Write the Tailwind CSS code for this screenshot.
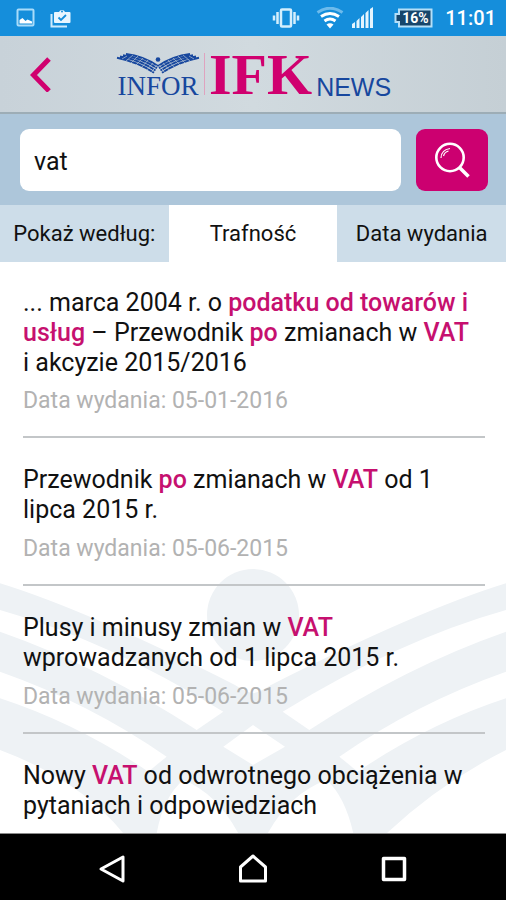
<!DOCTYPE html>
<html lang="pl">
<head>
<meta charset="utf-8">
<meta name="viewport" content="width=device-width, initial-scale=1">
<title>INFOR IFK News</title>
<script src="https://cdn.jsdelivr.net/npm/@tailwindcss/browser@4"></script>
</head>
<body class="flex min-h-screen flex-col bg-white font-[Roboto,sans-serif] text-[#111]">
  <!-- System status bar -->
  <div class="flex h-9 shrink-0 items-center justify-between bg-[#158edb] pr-2.5 pl-4 text-white">
    <div class="flex items-center gap-3.5">
      <svg class="h-5 w-5" viewBox="0 0 20 20" fill="none"><rect x="1.5" y="1.5" width="16" height="16" rx="1" stroke="#a9dcfa" stroke-width="2"/><path d="M3.500 15.500V12l3-2 3 3 2-1.500 4.500 2v2z" fill="#fff"/></svg>
      <svg class="h-5 w-[22px]" viewBox="0 0 22 20"><path d="M1.500 6v12.500H17" fill="none" stroke="#cdebfd" stroke-width="2"/><path d="M5 4h4a3.200 3.200 0 0 1 6 0h4.500q1 0 1 1v9q0 1-1 1H5q-1 0-1-1V5q0-1 1-1z" fill="#e8f6ff"/><path d="m8.500 9.500 2.500 2.500 5-5" fill="none" stroke="#158edb" stroke-width="1.800"/><circle cx="12" cy="3.400" r="1" fill="#158edb"/></svg>
    </div>
    <div class="flex items-center">
      <svg class="mr-4 h-5 w-7" viewBox="0 0 28 20" fill="none" stroke="#d5effd"><rect x="9" y="1.500" width="10" height="17" rx="1" stroke-width="2.500"/><path d="M5.500 4v12M22.500 4v12" stroke-width="2.500"/><path d="M2 7.500v5M26 7.500v5" stroke-width="2.500"/></svg>
      <svg class="mr-2 h-[22px] w-7" viewBox="0 0 28 22" fill="none"><path d="M1.500 5.500Q14-3 26.500 5.500" stroke="#6dbbec" stroke-width="3"/><path d="M5 9.500Q14 3.500 23 9.500M8.500 14Q14 10 19.500 14" stroke="#fff" stroke-width="3"/><path d="M10.500 17.500Q14 15 17.500 17.500L14 21.500z" fill="#fff"/></svg>
      <svg class="mr-5 h-[22px] w-[22px]" viewBox="0 0 22 22" fill="#e4f4fe"><path d="M0 21v-4l3-2v6zM4.500 21v-7l3-3v10zM9 21V10l3-3v14zM13.500 21V6l3-3v18zM18 21V2l3-2v21z"/></svg>
      <svg class="mr-3 h-5 w-[39px]" viewBox="0 0 39 20"><path d="M5 1.500h32.500v17H5V14H1.500V6H5z" fill="#17466b" stroke="#b5dff8" stroke-width="2"/><text x="21.500" y="15" text-anchor="middle" font-family="Roboto, sans-serif" font-weight="700" font-size="14" fill="#fff">16%</text></svg>
      <span class="text-[20px] leading-6 font-medium">11:01</span>
    </div>
  </div>

  <!-- App header -->
  <header class="relative z-10 flex h-[78px] shrink-0 items-center border-b-2 border-[#9dadb6] bg-linear-to-r from-[#c8d2d9] via-[#d1dadf] to-[#c5cfd5] pl-7">
    <a href="#" aria-label="Wstecz" class="block"><svg class="h-9 w-6" viewBox="0 0 24 36" fill="none" stroke="#d0006f" stroke-width="5"><path d="M21 3 5.500 19 21 35"/></svg></a>
    <div class="ml-16 flex h-12 items-end">
      <div class="flex w-[84px] flex-col items-center text-[#17479e]">
        <svg class="h-[21px] w-[84px]" viewBox="0 0 84 21" fill="none" stroke="currentColor">
          <circle cx="42" cy="6.500" r="2.300" fill="currentColor" stroke="none"/>
          <g id="wing">
            <path d="M10 1Q27 3 42 13M7 2.200Q26 5 41 15.300M4 3.500Q24 7 39.500 17.500M1 4.700Q22 9 38 19.700" stroke-width="1.900"/>
            <path d="M11 3 6 6M17 2l-7 6M22 3l-7 7M27 5l-7 7M32 7l-7 8M37 10l-7 8M40.500 12l-6 9" stroke="#ccd6dc" stroke-width=".6"/>
          </g>
          <use href="#wing" transform="matrix(-1 0 0 1 84 0)"/>
        </svg>
        <span class="font-['Liberation_Serif',serif] text-[27px] leading-6">INFOR</span>
      </div>
      <div class="ml-1 h-[42px] w-px self-center bg-[#dfa3bf]"></div>
      <span class="ml-1 font-['Liberation_Serif',serif] text-[58px] leading-[46px] font-bold text-[#d0006f]">IFK</span>
      <span class="ml-1 font-['Liberation_Sans',sans-serif] text-[25px] leading-[22px] text-[#17479e]">NEWS</span>
    </div>
  </header>

  <!-- Search -->
  <form class="flex shrink-0 gap-[15px] bg-[#adc6da] pt-[15px] pr-[18px] pb-3.5 pl-5" onsubmit="return false">
    <input type="text" value="vat" aria-label="Szukaj" class="h-[62px] min-w-0 flex-1 rounded-[9px] bg-white px-3.5 pt-0.5 text-[25px] outline-none">
    <button type="submit" aria-label="Szukaj" class="flex h-[62px] w-[72px] items-center justify-center rounded-[9px] bg-[#cc0070]">
      <svg class="h-9 w-9" viewBox="0 0 36 36" fill="none" stroke="#fff"><circle cx="16" cy="15.500" r="13.700" stroke-width="2.600"/><path d="m25.500 25.500 9 9" stroke-width="3.600"/><path d="M7 16q0-8 9-9.500M9.500 14q1-4 5-5" stroke-width="1.200"/></svg>
    </button>
  </form>

  <!-- Sort order -->
  <div class="grid h-[57px] shrink-0 grid-cols-3 bg-[#cddde9] text-center text-[22px] leading-[58px]">
    <span>Pokaż według:</span>
    <button type="button" class="bg-white">Trafność</button>
    <button type="button">Data wydania</button>
  </div>

  <!-- Results -->
  <main class="relative flex-1 overflow-hidden pr-[21px] pl-[23px]">
    <svg class="absolute bottom-0 left-0 w-full" viewBox="0 0 1518 850" aria-hidden="true">
      <circle cx="759" cy="195" r="138" fill="#eef2f5"/>
      <path d="M0 100Q260 180 705 405Q735 425 759 430Q783 425 813 405Q1258 180 1518 100V600Q1320 700 1160 850H1060Q1035 740 980 690Q870 730 803 850H715Q650 730 550 690Q490 740 470 850H370Q240 690 0 600z" fill="#eef2f5"/>
      <g id="gap" fill="#fff"><path d="M0 180Q320 270 670 485L590 540Q300 350 0 245z"/><path d="M0 365Q270 460 500 620L445 665Q230 520 0 445z"/></g>
      <use href="#gap" transform="matrix(-1 0 0 1 1518 0)"/>
      <path d="M759 525 855 590 759 645 670 590z" fill="#fff"/>
    </svg>
    <ul class="relative text-[25px] leading-[30px]">
      <li class="border-b-2 border-[#c3c6c8] pt-[26px] pb-5">
        <h2>... marca 2004 r. o <b class="font-medium text-[#c6106f]">podatku od towarów i</b><br><b class="font-medium text-[#c6106f]">usług</b> – Przewodnik <b class="font-medium text-[#c6106f]">po</b> zmianach w <b class="font-medium text-[#c6106f]">VAT</b><br>i akcyzie 2015/2016</h2>
        <p class="mt-2 text-[23px] text-[#b2b2b2]">Data wydania: 05-01-2016</p>
      </li>
      <li class="border-b-2 border-[#c3c6c8] pt-[27px] pb-5">
        <h2>Przewodnik <b class="font-medium text-[#c6106f]">po</b> zmianach w <b class="font-medium text-[#c6106f]">VAT</b> od 1<br>lipca 2015 r.</h2>
        <p class="mt-[9px] text-[23px] text-[#b2b2b2]">Data wydania: 05-06-2015</p>
      </li>
      <li class="border-b-2 border-[#c3c6c8] pt-[27px] pb-5">
        <h2>Plusy i minusy zmian w <b class="font-medium text-[#c6106f]">VAT</b><br>wprowadzanych od 1 lipca 2015 r.</h2>
        <p class="mt-[9px] text-[23px] text-[#b2b2b2]">Data wydania: 05-06-2015</p>
      </li>
      <li class="pt-[27px] pb-2">
        <h2>Nowy <b class="font-medium text-[#c6106f]">VAT</b> od odwrotnego obciążenia w<br>pytaniach i odpowiedziach</h2>
      </li>
    </ul>
  </main>

  <!-- System navigation -->
  <nav class="grid h-[67px] shrink-0 grid-cols-3 place-items-center border-t border-[#8a8a8a] bg-black px-[42px] pt-1">
    <button type="button" aria-label="Wstecz"><svg class="h-[30px] w-[30px]" viewBox="0 0 30 30" fill="none" stroke="#fff" stroke-width="3" stroke-linejoin="round"><path d="M26 3v24L4 15z"/></svg></button>
    <button type="button" aria-label="Ekran główny"><svg class="h-[30px] w-[30px]" viewBox="0 0 30 30" fill="none" stroke="#fff" stroke-width="3" stroke-linejoin="round"><path d="M15 2 2.500 13v14h25V13z"/></svg></button>
    <button type="button" aria-label="Ostatnie"><svg class="h-[30px] w-[30px]" viewBox="0 0 30 30" fill="none" stroke="#fff" stroke-width="3.500" stroke-linejoin="round"><path d="M4.500 4.500h21v21h-21z"/></svg></button>
  </nav>
</body>
</html>
